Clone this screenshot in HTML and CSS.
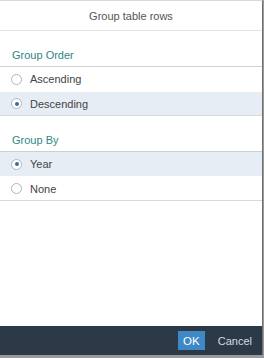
FILE: index.html
```html
<!DOCTYPE html>
<html lang="en">
<head>
  <meta charset="UTF-8">
  <meta name="viewport" content="width=device-width, initial-scale=1.0">
  <title>Group table rows</title>
  <link rel="stylesheet" href="styles.css">
</head>
<body>
  <div class="dialog">
    <div class="dialog-header">Group table rows</div>

    <div class="dialog-body">
      <div class="group">
        <div class="group-title">Group Order</div>
        <div class="options">
          <label class="option"><span class="radio"></span>Ascending</label>
          <label class="option selected"><span class="radio checked"></span>Descending</label>
        </div>
      </div>

      <div class="group">
        <div class="group-title">Group By</div>
        <div class="options">
          <label class="option selected"><span class="radio checked"></span>Year</label>
          <label class="option"><span class="radio"></span>None</label>
        </div>
      </div>
    </div>

    <div class="dialog-footer">
      <button class="btn-ok">OK</button>
      <button class="btn-cancel">Cancel</button>
    </div>
  </div>
</body>
</html>
```

FILE: styles.css
```css
html, body { margin: 0; padding: 0; height: 100%; }
body { background: #9a9a9a; font-family: "Liberation Sans", Arial, sans-serif; font-size: 11px; color: #444; }
.dialog { width: 263px; height: 355px; background: #fff; border-right: 1px solid #6e6e6e; display: flex; flex-direction: column; box-sizing: border-box; border-top: 1px solid #d8d8d8; }
.dialog-header { height: 29px; line-height: 30px; text-align: center; font-size: 11px; color: #555; border-bottom: 1px solid #e4e4e4; }
.dialog-body { flex: 1; }
.group { padding-top: 18px; }
.group-title { color: #2f8585; font-size: 11px; padding-left: 12px; height: 17px; }
.options { border-top: 1px solid #cfcfcf; border-bottom: 1px solid #d9d9d9; }
.option { display: flex; align-items: center; height: 24px; padding-left: 11px; box-sizing: border-box; }
.option + .option { border-top: 1px solid #fff; }
.option.selected { background: #e7edf5; }
.radio { width: 11px; height: 11px; border: 1px solid #b5b5b5; border-radius: 50%; background: #fff; box-sizing: border-box; margin-right: 8px; display: flex; align-items: center; justify-content: center; }
.radio.checked::after { content: ""; width: 4px; height: 4px; border-radius: 50%; background: #3b6d9a; }
.dialog-footer { height: 29px; background: #2c3a48; display: flex; justify-content: flex-end; align-items: center; padding-right: 10px; gap: 6px; }
.btn-ok { background: #3f88c6; color: #fff; border: none; font-family: inherit; font-size: 11.5px; width: 27px; height: 19px; padding: 0; }
.btn-cancel { background: none; border: none; color: #d4dbe2; font-family: inherit; font-size: 11px; padding: 0 0 0 7px; }
```
